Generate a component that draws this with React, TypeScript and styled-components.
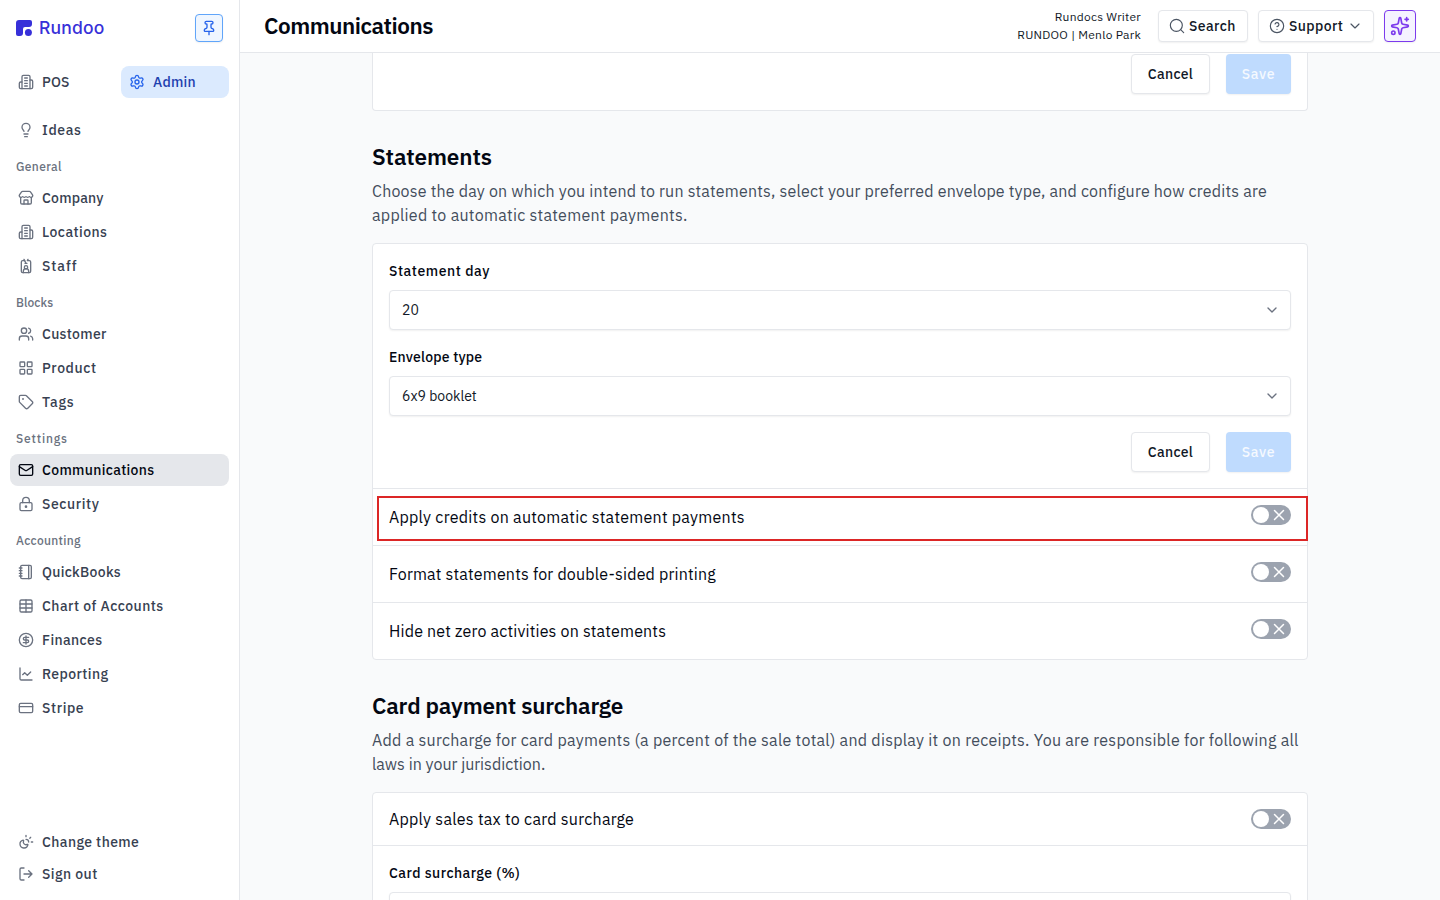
import React from "react";
import styled, { createGlobalStyle } from "styled-components";

const GlobalStyle = createGlobalStyle`
  *, *::before, *::after { box-sizing: border-box; }
  body {
    margin: 0;
    overflow: hidden;
    background: #f9fafb;
    color: #030712;
    font-family: "IBM Plex Sans", Roboto, "Liberation Sans", sans-serif;
  }
  button { font-family: inherit; }
`;

const glyphs = {
  building: (
    <>
      <path d="M6 22V4a2 2 0 0 1 2-2h8a2 2 0 0 1 2 2v18Z" />
      <path d="M6 12H4a2 2 0 0 0-2 2v6a2 2 0 0 0 2 2h2" />
      <path d="M18 9h2a2 2 0 0 1 2 2v9a2 2 0 0 1-2 2h-2" />
      <path d="M10 6h4M10 10h4M10 14h4M10 18h4" />
    </>
  ),
  settings: (
    <>
      <path d="M9.671 4.136a2.34 2.34 0 0 1 4.659 0 2.34 2.34 0 0 0 3.319 1.915 2.34 2.34 0 0 1 2.33 4.033 2.34 2.34 0 0 0 0 3.831 2.34 2.34 0 0 1-2.33 4.033 2.34 2.34 0 0 0-3.319 1.915 2.34 2.34 0 0 1-4.659 0 2.34 2.34 0 0 0-3.32-1.915 2.34 2.34 0 0 1-2.33-4.033 2.34 2.34 0 0 0 0-3.831A2.34 2.34 0 0 1 6.35 6.051a2.34 2.34 0 0 0 3.319-1.915" />
      <circle cx="12" cy="12" r="3" />
    </>
  ),
  bulb: (
    <>
      <path d="M15 14c.2-1 .7-1.7 1.5-2.5 1-.9 1.5-2.2 1.5-3.5A6 6 0 0 0 6 8c0 1 .2 2.2 1.5 3.5.7.7 1.3 1.5 1.5 2.5" />
      <path d="M9 18h6M10 22h4" />
    </>
  ),
  store: (
    <>
      <path d="M15 21v-5a1 1 0 0 0-1-1h-4a1 1 0 0 0-1 1v5" />
      <path d="M17.774 10.31a1.12 1.12 0 0 0-1.549 0 2.5 2.5 0 0 1-3.451 0 1.12 1.12 0 0 0-1.548 0 2.5 2.5 0 0 1-3.452 0 1.12 1.12 0 0 0-1.549 0 2.5 2.5 0 0 1-3.77-3.248l2.889-4.184A2 2 0 0 1 7 2h10a2 2 0 0 1 1.653.873l2.895 4.192a2.5 2.5 0 0 1-3.774 3.244" />
      <path d="M4 10.95V19a2 2 0 0 0 2 2h12a2 2 0 0 0 2-2v-8.05" />
    </>
  ),
  badge: (
    <>
      <path d="m15 2-1 2h3a2 2 0 0 1 2 2v14a2 2 0 0 1-2 2H7a2 2 0 0 1-2-2V6a2 2 0 0 1 2-2h3" />
      <path d="m9 2 3 6M13.5 8h-3" />
      <path d="M8 22v-2a4 4 0 0 1 8 0v2" />
      <circle cx="12" cy="14" r="2.5" />
    </>
  ),
  users: (
    <>
      <path d="M16 21v-2a4 4 0 0 0-4-4H6a4 4 0 0 0-4 4v2" />
      <circle cx="9" cy="7" r="4" />
      <path d="M22 21v-2a4 4 0 0 0-3-3.87M16 3.13a4 4 0 0 1 0 7.75" />
    </>
  ),
  grid: (
    <>
      <rect width="7" height="7" x="3" y="3" rx="1" />
      <rect width="7" height="7" x="14" y="3" rx="1" />
      <rect width="7" height="7" x="14" y="14" rx="1" />
      <rect width="7" height="7" x="3" y="14" rx="1" />
    </>
  ),
  tag: (
    <>
      <path d="M12.586 2.586A2 2 0 0 0 11.172 2H4a2 2 0 0 0-2 2v7.172a2 2 0 0 0 .586 1.414l8.704 8.704a2.426 2.426 0 0 0 3.42 0l6.58-6.58a2.426 2.426 0 0 0 0-3.42z" />
      <circle cx="7.5" cy="7.5" r=".5" fill="currentColor" />
    </>
  ),
  mail: (
    <>
      <rect width="20" height="16" x="2" y="4" rx="2" />
      <path d="m22 7-8.97 5.7a1.94 1.94 0 0 1-2.06 0L2 7" />
    </>
  ),
  lock: (
    <>
      <circle cx="12" cy="16" r="1" />
      <rect x="3" y="10" width="18" height="12" rx="2" />
      <path d="M7 10V7a5 5 0 0 1 10 0v3" />
    </>
  ),
  notebook: (
    <>
      <path d="M2 6h4M2 10h4M2 14h4M2 18h4" />
      <rect width="16" height="20" x="4" y="2" rx="2" />
      <path d="M16 2v20" />
    </>
  ),
  table: (
    <>
      <path d="M12 3v18" />
      <rect width="18" height="18" x="3" y="3" rx="2" />
      <path d="M3 9h18M3 15h18" />
    </>
  ),
  dollar: (
    <>
      <circle cx="12" cy="12" r="10" />
      <path d="M16 8h-6a2 2 0 1 0 0 4h4a2 2 0 1 1 0 4H8M12 18V6" />
    </>
  ),
  chart: (
    <>
      <path d="M3 3v16a2 2 0 0 0 2 2h16" />
      <path d="m19 9-5 5-4-4-3 3" />
    </>
  ),
  card: (
    <>
      <rect width="20" height="14" x="2" y="5" rx="2" />
      <path d="M2 10h20" />
    </>
  ),
  theme: (
    <>
      <path d="M12 2v2M16 12a4 4 0 0 0-4-4M19 5l-1.256 1.256M20 12h2" />
      <path d="M14.837 16.385a6 6 0 1 1-7.223-7.222c.624-.147.97.66.715 1.248a4 4 0 0 0 5.26 5.259c.589-.255 1.396.09 1.248.715" />
    </>
  ),
  logout: (
    <>
      <path d="M9 21H5a2 2 0 0 1-2-2V5a2 2 0 0 1 2-2h4" />
      <path d="m16 17 5-5-5-5M21 12H9" />
    </>
  ),
  pin: (
    <>
      <path d="M12 17v5" />
      <path d="M9 10.76a2 2 0 0 1-1.11 1.79l-1.78.9A2 2 0 0 0 5 15.24V16a1 1 0 0 0 1 1h12a1 1 0 0 0 1-1v-.76a2 2 0 0 0-1.11-1.79l-1.78-.9A2 2 0 0 1 15 10.76V7a1 1 0 0 1 1-1 2 2 0 0 0 0-4H8a2 2 0 0 0 0 4 1 1 0 0 1 1 1z" />
    </>
  ),
  search: (
    <>
      <circle cx="11" cy="11" r="9" />
      <path d="m22 22-4.5-4.5" />
    </>
  ),
  help: (
    <>
      <circle cx="12" cy="12" r="10" />
      <path d="M9.09 9a3 3 0 0 1 5.83 1c0 2-3 3-3 3M12 17h.01" />
    </>
  ),
  chevron: <path d="m6 9 6 6 6-6" />,
  sparkles: (
    <>
      <path d="M11.017 2.814a1 1 0 0 1 1.966 0l1.051 5.558a2 2 0 0 0 1.594 1.594l5.558 1.051a1 1 0 0 1 0 1.966l-5.558 1.051a2 2 0 0 0-1.594 1.594l-1.051 5.558a1 1 0 0 1-1.966 0l-1.051-5.558a2 2 0 0 0-1.594-1.594l-5.558-1.051a1 1 0 0 1 0-1.966l5.558-1.051a2 2 0 0 0 1.594-1.594z" />
      <path d="M20 2v4M22 4h-4" />
      <circle cx="4" cy="20" r="2" />
    </>
  ),
  close: <path d="M18 6 6 18M6 6l12 12" />,
};

type GlyphName = keyof typeof glyphs;

const Svg = styled.svg`
  flex: none;
  display: block;
  fill: none;
  stroke: currentColor;
  stroke-linecap: round;
  stroke-linejoin: round;
`;

function Icon({ name, size = 16, stroke = 2 }: { name: GlyphName; size?: number; stroke?: number }) {
  return (
    <Svg width={size} height={size} viewBox="0 0 24 24" strokeWidth={stroke} aria-hidden>
      {glyphs[name]}
    </Svg>
  );
}

const Shell = styled.div`
  display: flex;
  height: 900px;
  overflow: hidden;
`;

const Sidebar = styled.aside`
  flex: none;
  display: flex;
  flex-direction: column;
  width: 240px;
  padding: 14px 10px 10px;
  background: #fff;
  border-right: 1px solid #e5e7eb;
`;

const Brand = styled.div`
  display: flex;
  align-items: center;
  justify-content: space-between;
  height: 28px;
  padding: 0 6px;
  margin-bottom: 24px;
`;

const Logo = styled.div`
  display: flex;
  align-items: center;
  gap: 7px;
  color: #3730d9;
`;

const Wordmark = styled.span`
  font: 500 17.5px/28px Inter, sans-serif;
  letter-spacing: 0.2px;
`;

const PinButton = styled.button`
  display: grid;
  place-items: center;
  width: 28px;
  height: 28px;
  padding: 0;
  border: 1px solid #60a5fa;
  border-radius: 4px;
  background: #eff6ff;
  color: #2563eb;
  box-shadow: 0 1px 2px rgba(0, 0, 0, 0.06);
`;

const ModeSwitch = styled.div`
  display: grid;
  grid-template-columns: 108px 108px;
  gap: 3px;
  margin-bottom: 16px;
`;

const NavList = styled.nav`
  display: flex;
  flex-direction: column;
  gap: 2px;
`;

type Tone = "plain" | "current" | "accent";

const toneBg = { plain: "transparent", current: "#e5e7eb", accent: "#dbeafe" };
const toneText = { plain: "#374151", current: "#030712", accent: "#1e40af" };
const toneIcon = { plain: "#6b7280", current: "#030712", accent: "#2563eb" };

const NavLink = styled.a<{ $tone: Tone; $spacing: number }>`
  display: flex;
  align-items: center;
  gap: 8px;
  height: 32px;
  padding: 0 8px;
  border-radius: 8px;
  background: ${(p) => toneBg[p.$tone]};
  color: ${(p) => toneText[p.$tone]};
  font-size: 14px;
  font-weight: 500;
  letter-spacing: ${(p) => p.$spacing}px;
  white-space: nowrap;

  svg { color: ${(p) => toneIcon[p.$tone]}; }
`;

const GroupLabel = styled.div<{ $spacing: number }>`
  height: 32px;
  padding: 3px 6px 0;
  color: #6b7280;
  font-size: 12px;
  font-weight: 500;
  line-height: 32px;
  letter-spacing: ${(p) => p.$spacing}px;
`;

const NavFooter = styled.div`
  margin-top: auto;
`;

const Main = styled.main`
  flex: 1;
  display: flex;
  flex-direction: column;
  min-width: 0;
`;

const Header = styled.header`
  flex: none;
  display: flex;
  align-items: center;
  height: 53px;
  padding: 0 24px;
  background: #fff;
  border-bottom: 1px solid #e5e7eb;
`;

const PageTitle = styled.h1`
  flex: 1;
  margin: 0;
  font-size: 22.5px;
  font-weight: 600;
  line-height: 28px;
  letter-spacing: -0.47px;
`;

const Account = styled.div`
  margin-right: 17px;
  font-size: 12px;
  line-height: 18px;
  letter-spacing: 0.25px;
  text-align: right;
  color: #111827;
`;

const HeaderActions = styled.div`
  display: flex;
  gap: 10px;
`;

const HeaderButton = styled.button<{ $width: number; $magic?: boolean }>`
  display: flex;
  align-items: center;
  justify-content: ${(p) => (p.$magic ? "center" : "flex-start")};
  gap: 4px;
  width: ${(p) => p.$width}px;
  height: 32px;
  padding: ${(p) => (p.$magic ? "0" : "0 10px")};
  border: 1px solid ${(p) => (p.$magic ? "#7c3aed" : "#e5e7eb")};
  border-radius: 4px;
  background: ${(p) => (p.$magic ? "#f5f3ff" : "#fff")};
  color: #111827;
  box-shadow: 0 1px 2px rgba(0, 0, 0, 0.06);
  font-size: 14px;
  font-weight: 500;
  letter-spacing: 0.4px;

  svg { color: ${(p) => (p.$magic ? "#7c3aed" : "#4b5563")}; }
`;

const Scroller = styled.div`
  flex: 1;
  min-height: 0;
  overflow: hidden;
`;

const Column = styled.div`
  width: 936px;
  margin: 0 auto;
`;

const Card = styled.section<{ $continued?: boolean }>`
  background: #fff;
  border: 1px solid #e5e7eb;
  border-top-width: ${(p) => (p.$continued ? 0 : 1)}px;
  border-radius: ${(p) => (p.$continued ? "0 0 4px 4px" : "4px")};
`;

const SectionTitle = styled.h2<{ $spacing: number }>`
  margin: 32px 0 8px;
  font-size: 22.5px;
  font-weight: 600;
  line-height: 28px;
  letter-spacing: ${(p) => p.$spacing}px;
`;

const Description = styled.p`
  margin: 0 0 16px;
  color: #434d5c;
  font-size: 16px;
  line-height: 24px;
`;

const Line = styled.span<{ $spacing: number }>`
  display: block;
  white-space: nowrap;
  letter-spacing: ${(p) => p.$spacing}px;
`;

const Form = styled.div<{ $divided?: boolean; $tight?: boolean }>`
  display: flex;
  flex-direction: column;
  gap: 16px;
  padding: ${(p) => (p.$tight ? "1px" : "16px")} 16px 16px;
  border-top: ${(p) => (p.$divided ? "1px solid #e5e7eb" : "0")};
`;

const Field = styled.label`
  display: flex;
  flex-direction: column;
  gap: 8px;
`;

const FieldLabel = styled.span<{ $spacing: number }>`
  font-size: 14px;
  font-weight: 500;
  line-height: 22px;
  letter-spacing: ${(p) => p.$spacing}px;
`;

const SelectBox = styled.div`
  display: flex;
  align-items: center;
  justify-content: space-between;
  height: 40px;
  padding: 0 10px 0 12px;
  border: 1px solid #e5e7eb;
  border-radius: 4px;
  background: #fff;
  box-shadow: 0 1px 2px rgba(0, 0, 0, 0.06);
  color: #111827;
  font-size: 14px;

  svg { color: #6b7280; }
`;

const Actions = styled.div`
  display: flex;
  justify-content: flex-end;
  gap: 16px;
`;

const ActionButton = styled.button<{ $primary?: boolean }>`
  width: ${(p) => (p.$primary ? 65 : 79)}px;
  height: 40px;
  padding: 0;
  border: ${(p) => (p.$primary ? "0" : "1px solid #e5e7eb")};
  border-radius: 4px;
  background: ${(p) => (p.$primary ? "#bfdbfe" : "#fff")};
  color: ${(p) => (p.$primary ? "#f5f9ff" : "#111827")};
  box-shadow: 0 1px 2px rgba(0, 0, 0, 0.06);
  font-size: 14px;
  font-weight: 500;
  letter-spacing: ${(p) => (p.$primary ? 0.7 : 0.3)}px;
`;

const ToggleRow = styled.div<{ $divided?: boolean; $compact?: boolean }>`
  position: relative;
  display: flex;
  align-items: flex-start;
  justify-content: space-between;
  padding: 16px;
  border-top: ${(p) => (p.$divided ? "1px solid #e5e7eb" : "0")};
  font-size: 16px;
  line-height: ${(p) => (p.$compact ? 20 : 24)}px;
`;

const Track = styled.span`
  display: flex;
  align-items: center;
  justify-content: space-between;
  width: 40px;
  height: 20px;
  padding: 0 3px 0 2px;
  border-radius: 10px;
  background: #9ca3af;
  color: #fff;
`;

const Knob = styled.span`
  width: 16px;
  height: 16px;
  border-radius: 50%;
  background: #fff;
`;

const Highlight = styled.div`
  position: absolute;
  top: 7px;
  left: 4px;
  right: -1px;
  height: 45px;
  border: 2px solid #dc2626;
`;

function Toggle() {
  return (
    <Track role="switch" aria-checked={false}>
      <Knob />
      <Icon name="close" size={18} />
    </Track>
  );
}

function FormActions() {
  return (
    <Actions>
      <ActionButton>Cancel</ActionButton>
      <ActionButton $primary disabled>
        Save
      </ActionButton>
    </Actions>
  );
}

type Item = { icon: GlyphName; label: string; spacing?: number; tone?: Tone };

function NavItem({ icon, label, spacing = 0.4, tone = "plain" }: Item) {
  return (
    <NavLink $tone={tone} $spacing={spacing}>
      <Icon name={icon} />
      {label}
    </NavLink>
  );
}

const groups: { title: string; spacing: number; items: Item[] }[] = [
  {
    title: "General",
    spacing: 0.36,
    items: [
      { icon: "store", label: "Company", spacing: 0.2 },
      { icon: "building", label: "Locations", spacing: 0.45 },
      { icon: "badge", label: "Staff", spacing: 0.95 },
    ],
  },
  {
    title: "Blocks",
    spacing: 0.1,
    items: [
      { icon: "users", label: "Customer", spacing: 0.3 },
      { icon: "grid", label: "Product", spacing: 0.6 },
      { icon: "tag", label: "Tags", spacing: 0.8 },
    ],
  },
  {
    title: "Settings",
    spacing: 0.85,
    items: [
      { icon: "mail", label: "Communications", spacing: 0.33, tone: "current" },
      { icon: "lock", label: "Security", spacing: 0.6 },
    ],
  },
  {
    title: "Accounting",
    spacing: 0.3,
    items: [
      { icon: "notebook", label: "QuickBooks", spacing: 0.3 },
      { icon: "table", label: "Chart of Accounts", spacing: 0.46 },
      { icon: "dollar", label: "Finances" },
      { icon: "chart", label: "Reporting" },
      { icon: "card", label: "Stripe", spacing: 0.6 },
    ],
  },
];

export default function App() {
  return (
    <Shell>
      <GlobalStyle />
      <Sidebar>
        <Brand>
          <Logo>
            <svg width="16" height="16" viewBox="0 0 16 16" fill="currentColor" aria-hidden>
              <path d="M3 0h11a2 2 0 0 1 2 2v2a3 3 0 0 1-3 3H9a2 2 0 0 0-2 2v4a3 3 0 0 1-3 3H2a2 2 0 0 1-2-2V3a3 3 0 0 1 3-3Z" />
              <circle cx="12.4" cy="12.4" r="3.5" />
            </svg>
            <Wordmark>Rundoo</Wordmark>
          </Logo>
          <PinButton aria-label="Pin sidebar">
            <Icon name="pin" />
          </PinButton>
        </Brand>
        <ModeSwitch>
          <NavItem icon="building" label="POS" spacing={0.2} />
          <NavItem icon="settings" label="Admin" spacing={0.2} tone="accent" />
        </ModeSwitch>
        <NavList>
          <NavItem icon="bulb" label="Ideas" spacing={0.65} />
          {groups.map((group) => (
            <React.Fragment key={group.title}>
              <GroupLabel $spacing={group.spacing}>{group.title}</GroupLabel>
              {group.items.map((item) => (
                <NavItem key={item.label} {...item} />
              ))}
            </React.Fragment>
          ))}
        </NavList>
        <NavFooter>
          <NavItem icon="theme" label="Change theme" />
          <NavItem icon="logout" label="Sign out" spacing={0.45} />
        </NavFooter>
      </Sidebar>
      <Main>
        <Header>
          <PageTitle>Communications</PageTitle>
          <Account>
            Rundocs Writer
            <br />
            RUNDOO | Menlo Park
          </Account>
          <HeaderActions>
            <HeaderButton $width={90}>
              <Icon name="search" stroke={1.75} />
              <span>Search</span>
            </HeaderButton>
            <HeaderButton $width={116}>
              <Icon name="help" stroke={1.75} />
              <span>Support</span>
              <Icon name="chevron" stroke={1.75} />
            </HeaderButton>
            <HeaderButton $width={32} $magic aria-label="Assistant">
              <Icon name="sparkles" size={20} />
            </HeaderButton>
          </HeaderActions>
        </Header>
        <Scroller>
          <Column>
            <Card $continued>
              <Form $tight>
                <FormActions />
              </Form>
            </Card>

            <SectionTitle $spacing={-0.1}>Statements</SectionTitle>
            <Description>
              <Line $spacing={0.192}>
                Choose the day on which you intend to run statements, select your preferred envelope type, and configure how credits are
              </Line>
              <Line $spacing={0.28}>applied to automatic statement payments.</Line>
            </Description>
            <Card>
              <Form>
                <Field>
                  <FieldLabel $spacing={0.56}>Statement day</FieldLabel>
                  <SelectBox>
                    20
                    <Icon name="chevron" />
                  </SelectBox>
                </Field>
                <Field>
                  <FieldLabel $spacing={0.2}>Envelope type</FieldLabel>
                  <SelectBox>
                    6x9 booklet
                    <Icon name="chevron" />
                  </SelectBox>
                </Field>
                <FormActions />
              </Form>
              <ToggleRow $divided>
                <Line $spacing={0.26}>Apply credits on automatic statement payments</Line>
                <Toggle />
                <Highlight />
              </ToggleRow>
              <ToggleRow $divided>
                <Line $spacing={0.19}>Format statements for double-sided printing</Line>
                <Toggle />
              </ToggleRow>
              <ToggleRow $divided>
                <Line $spacing={0.18}>Hide net zero activities on statements</Line>
                <Toggle />
              </ToggleRow>
            </Card>

            <SectionTitle $spacing={-0.2}>Card payment surcharge</SectionTitle>
            <Description>
              <Line $spacing={0.262}>
                Add a surcharge for card payments (a percent of the sale total) and display it on receipts. You are responsible for following all
              </Line>
              <Line $spacing={0}>laws in your jurisdiction.</Line>
            </Description>
            <Card>
              <ToggleRow $compact>
                <Line $spacing={0.26}>Apply sales tax to card surcharge</Line>
                <Toggle />
              </ToggleRow>
              <Form $divided>
                <Field>
                  <FieldLabel $spacing={0.46}>Card surcharge (%)</FieldLabel>
                  <SelectBox />
                </Field>
              </Form>
            </Card>
          </Column>
        </Scroller>
      </Main>
    </Shell>
  );
}
